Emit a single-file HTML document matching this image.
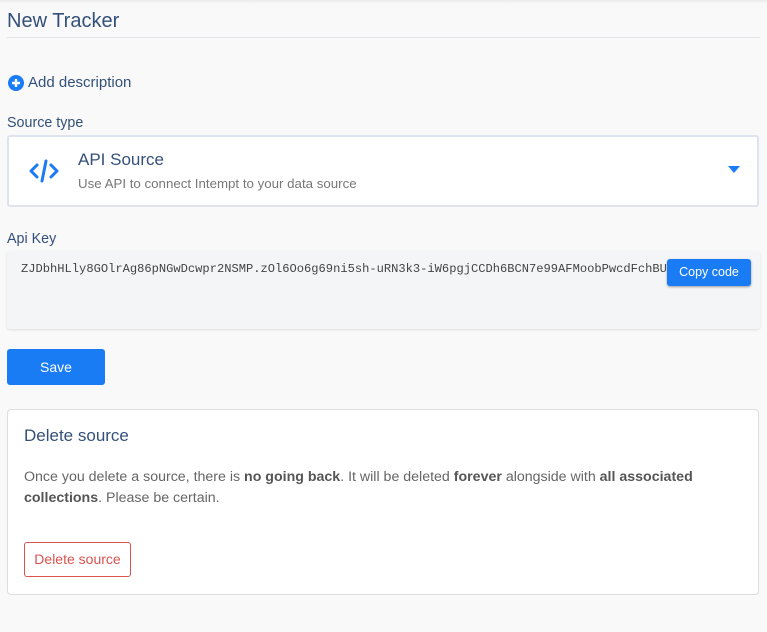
<!DOCTYPE html>
<html><head><meta charset="utf-8"><style>
*{box-sizing:border-box;margin:0;padding:0}
body{width:767px;height:632px;background:#f9f9fa;font-family:"Liberation Sans",sans-serif;color:#2f4a6d;position:relative;overflow:hidden}
.abs{position:absolute}
.topshadow{left:0;top:0;width:767px;height:4px;background:linear-gradient(#ececee,#f9f9fa)}
h1{position:absolute;left:7px;top:10px;font-size:20px;font-weight:normal;color:#34507a}
.hr{left:7px;top:37px;width:753px;height:1px;background:#e3e5ea}
.add{left:8px;top:74px;font-size:15px;color:#34507a;display:flex;align-items:center;gap:4px}
.lbl{font-size:14.3px;color:#34507a}
.card{left:7px;top:135px;width:752px;height:72px;background:#fff;border:2px solid #dfe3ee;border-radius:3px}
.key{left:7px;top:251px;width:753px;height:78px;background:#f4f5f7;border-radius:3px;box-shadow:0 1px 2px #ddd}
.mono{font-family:"Liberation Mono",monospace;font-size:12.1px;color:#444;left:21px;top:262px;white-space:nowrap;width:646px;overflow:hidden}
.copy{left:667px;top:259px;width:84px;height:27px;background:#1a7cf5;color:#fff;font-size:12.5px;border-radius:3px;text-align:center;line-height:27px;box-shadow:0 1px 2px #999}
.save{left:7px;top:349px;width:98px;height:36px;background:#1a7cf5;color:#fff;font-size:14px;border-radius:3px;text-align:center;line-height:36px}
.del{left:7px;top:409px;width:752px;height:186px;background:#fff;border:1px solid #dedede;border-radius:4px}
.del h2{position:absolute;left:16px;top:16px;font-size:17px;font-weight:normal;color:#34507a}
.del p{position:absolute;left:16px;top:57px;width:720px;font-size:14.2px;line-height:21px;color:#666}
.del p b{color:#555}
.dbtn{position:absolute;left:16px;top:132px;width:107px;height:35px;border:1px solid #d9534f;border-radius:3px;color:#d9534f;font-size:14px;text-align:center;line-height:33px}
</style></head><body>
<div class="abs topshadow"></div>
<h1>New Tracker</h1>
<div class="abs hr"></div>
<div class="abs add"><svg width="16" height="16" viewBox="0 0 16 16"><circle cx="8" cy="8" r="8" fill="#1a7cf5"/><path d="M8 4v8M4 8h8" stroke="#fff" stroke-width="2.4"/></svg>Add description</div>
<div class="abs lbl" style="left:7px;top:115px">Source type</div>
<div class="abs card">
 <svg class="abs" style="left:19px;top:21px" width="32" height="26" viewBox="0 0 32 26"><path d="M9 7L3 13l6 6M23 7l6 6-6 6M18 3l-4 20" stroke="#1a7cf5" stroke-width="3" fill="none" stroke-linecap="round" stroke-linejoin="round"/></svg>
 <div class="abs" style="left:69px;top:13px;font-size:17px;color:#34507a">API Source</div>
 <div class="abs" style="left:69px;top:39px;font-size:13.3px;color:#777">Use API to connect Intempt to your data source</div>
 <svg class="abs" style="left:719px;top:29px" width="12" height="8" viewBox="0 0 12 8"><path d="M0 0h12L6 7z" fill="#1a7cf5"/></svg>
</div>
<div class="abs lbl" style="left:7px;top:231px">Api Key</div>
<div class="abs key"></div>
<div class="abs mono">ZJDbhHLly8GOlrAg86pNGwDcwpr2NSMP.zOl6Oo6g69ni5sh-uRN3k3-iW6pgjCCDh6BCN7e99AFMoobPwcdFchBUy</div>
<div class="abs copy">Copy code</div>
<div class="abs save">Save</div>
<div class="abs del">
 <h2>Delete source</h2>
 <p>Once you delete a source, there is <b>no going back</b>. It will be deleted <b>forever</b> alongside with <b>all associated collections</b>. Please be certain.</p>
 <div class="dbtn">Delete source</div>
</div>
</body></html>
